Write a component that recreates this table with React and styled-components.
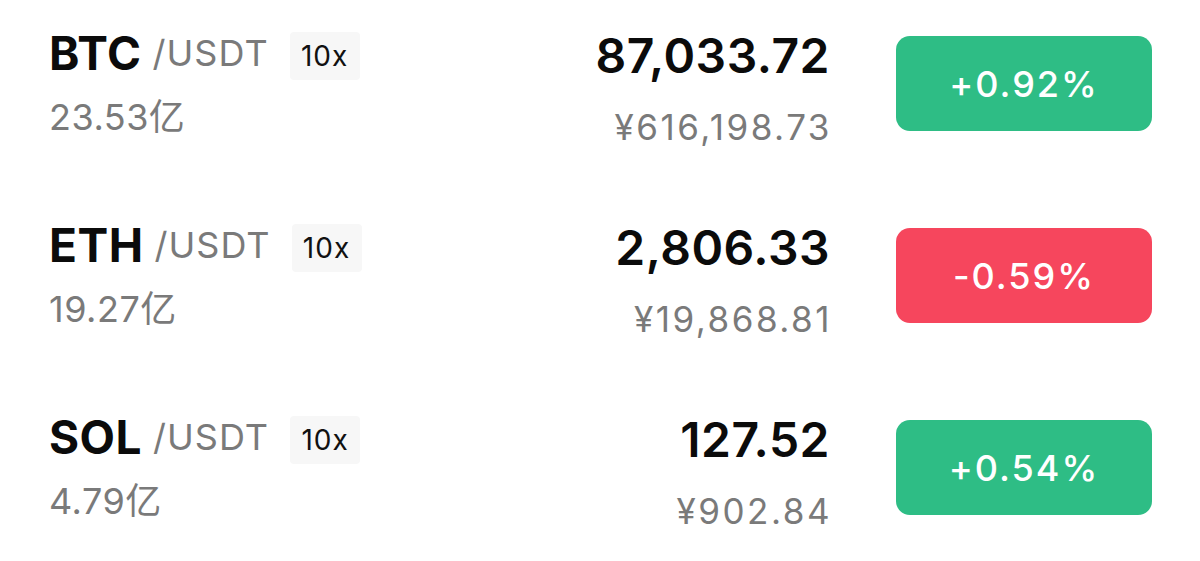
import styled, { createGlobalStyle } from 'styled-components'

const GlobalStyle = createGlobalStyle`
  body {
    margin: 0;
    background: #ffffff;
    font-family: Inter, "Noto Sans CJK SC", sans-serif;
  }
`

const markets = [
  { base: 'BTC', quote: '/USDT', lever: '10x', volume: '23.53亿', price: '87,033.72', cny: '¥616,198.73', change: '+0.92%', up: true },
  { base: 'ETH', quote: '/USDT', lever: '10x', volume: '19.27亿', price: '2,806.33', cny: '¥19,868.81', change: '-0.59%', up: false },
  { base: 'SOL', quote: '/USDT', lever: '10x', volume: '4.79亿', price: '127.52', cny: '¥902.84', change: '+0.54%', up: true },
]

const List = styled.div`
  padding: 0 48px 0 49px;
`

const Row = styled.div`
  display: grid;
  grid-template-columns: 1fr auto 256px;
  column-gap: 66px;
  align-items: start;
  height: 192px;
`

const Pair = styled.div`
  margin-top: 25px;
`

const PairLine = styled.div`
  display: flex;
  align-items: center;
  height: 56px;
`

const Base = styled.span`
  font-size: 46px;
  line-height: 56px;
  font-weight: 700;
  color: #0b0b0b;
  letter-spacing: 0.5px;
`

const Quote = styled.span`
  margin-left: 11px;
  font-size: 36px;
  line-height: 56px;
  color: #7a7a7a;
  letter-spacing: 1px;
`

const Lever = styled.span`
  margin-left: 21px;
  margin-top: 5px;
  width: 70px;
  height: 48px;
  display: flex;
  align-items: center;
  justify-content: center;
  background: #f7f7f7;
  border-radius: 4px;
  font-size: 28px;
  letter-spacing: 1px;
  color: #111111;
`

const Volume = styled.div`
  margin-top: 14px;
  font-size: 36px;
  line-height: 44px;
  color: #7a7a7a;
  letter-spacing: 0.5px;
`

const Prices = styled.div`
  margin-top: 28px;
  text-align: right;
`

const Price = styled.div`
  font-size: 48px;
  line-height: 56px;
  font-weight: 600;
  color: #0b0b0b;
  letter-spacing: 0.5px;
`

const Cny = styled.div`
  margin-top: 21px;
  font-size: 35px;
  line-height: 44px;
  color: #7a7a7a;
  letter-spacing: 2.5px;
  margin-right: -2px;
`

const Change = styled.div`
  margin-top: 36px;
  height: 95px;
  border-radius: 14px;
  display: flex;
  align-items: center;
  justify-content: center;
  background: ${p => (p.$up ? '#2ebd85' : '#f6465d')};
  color: #ffffff;
  font-size: 36px;
  font-weight: 500;
  letter-spacing: 2px;
`

export default function App() {
  return (
    <>
      <GlobalStyle />
      <List>
        {markets.map(m => (
          <Row key={m.base}>
            <Pair>
              <PairLine>
                <Base>{m.base}</Base>
                <Quote>{m.quote}</Quote>
                <Lever>{m.lever}</Lever>
              </PairLine>
              <Volume>{m.volume}</Volume>
            </Pair>
            <Prices>
              <Price>{m.price}</Price>
              <Cny>{m.cny}</Cny>
            </Prices>
            <Change $up={m.up}>{m.change}</Change>
          </Row>
        ))}
      </List>
    </>
  )
}
